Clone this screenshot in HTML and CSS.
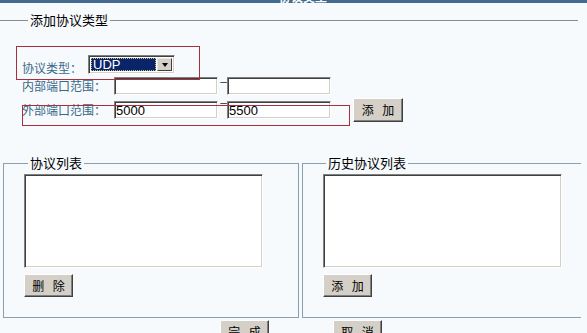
FILE: index.html
```html
<!DOCTYPE html>
<html lang="zh-CN">
<head>
<meta charset="utf-8">
<title>协议类型</title>
<link rel="stylesheet" href="styles.css">
</head>
<body>
<div class="topbar"><span class="title">协议类型</span></div>

<fieldset class="fs-add">
  <legend>添加协议类型</legend>
  <div class="form">
    <div class="row row-type">
      <span class="label label-short">协议类型：</span>
      <div class="select" role="listbox">
        <span class="sel-value">UDP</span>
        <span class="sel-btn"><span class="tri"></span></span>
      </div>
    </div>
    <div class="row row-int">
      <span class="label">内部端口范围：</span>
      <input class="txt" type="text" value="">
      <span class="dash">–</span>
      <input class="txt" type="text" value="">
    </div>
    <div class="row row-ext">
      <span class="label">外部端口范围：</span>
      <input class="txt" type="text" value="5000">
      <span class="dash">–</span>
      <input class="txt" type="text" value="5500">
      <button class="btn btn-add" type="button">添 加</button>
    </div>
  </div>
</fieldset>

<div class="lists">
  <fieldset class="fs-list fs-left">
    <legend>协议列表</legend>
    <textarea class="area"></textarea>
    <div class="list-actions"><button class="btn" type="button">删 除</button></div>
  </fieldset>
  <fieldset class="fs-list fs-right">
    <legend>历史协议列表</legend>
    <textarea class="area"></textarea>
    <div class="list-actions"><button class="btn" type="button">添 加</button></div>
  </fieldset>
</div>

<div class="actions">
  <button class="btn" type="button">完 成</button>
  <button class="btn" type="button">取 消</button>
</div>

<div class="mark mark-1"></div>
<div class="mark mark-2"></div>
</body>
</html>
```

FILE: styles.css
```css
html, body {
  margin: 0;
  padding: 0;
}
body {
  background: #f6fafc;
  font-family: "Noto Sans CJK SC", "Noto Sans", sans-serif;
  font-size: 12px;
  color: #000;
  width: 587px;
  height: 333px;
  overflow: hidden;
  position: relative;
}

.topbar {
  height: 3px;
  background: #416a8e;
  overflow: hidden;
  display: flex;
  align-items: flex-end;
  padding-left: 279px;
}
.title {
  color: #fff;
  font-weight: bold;
  font-size: 12px;
  line-height: 12px;
  flex: none;
}

/* ---------- add fieldset ---------- */
.fs-add {
  margin: 9px 9px 0 0;
  padding: 0;
  border: none;
  border-top: 1px solid #8c8c8c;
  min-inline-size: 0;
}
.fs-add legend {
  margin-left: 28px;
  padding: 0 2px;
  font-size: 13px;
  line-height: 16px;
}
.form {
  padding: 27px 0 0 22px;
}
.row {
  display: flex;
  align-items: center;
}
.row-type {
  height: 20px;
  align-items: flex-start;
}
.row-int {
  height: 18px;
  margin-top: 2px;
}
.row-ext {
  height: 24px;
  margin-top: 3px;
}
.label {
  color: #3a6888;
  width: 92px;
  flex: none;
  line-height: 14px;
  white-space: nowrap;
}
.label-short {
  width: 66px;
  align-self: flex-end;
}

.select {
  width: 87px;
  height: 19px;
  box-sizing: border-box;
  border-top: 1px solid #808080;
  border-left: 1px solid #808080;
  border-right: 1px solid #ffffff;
  border-bottom: 1px solid #ffffff;
  box-shadow: inset 1px 1px #404040, inset -1px -1px #d4d0c8;
  background: #fff;
  padding: 2px;
  display: flex;
  gap: 1px;
}
.sel-value {
  flex: 1;
  background: #0a246a;
  color: #fff;
  font-family: "Liberation Sans", Arial, sans-serif;
  font-size: 13px;
  line-height: 13px;
  padding-left: 2px;
  outline: 1px dotted #c8c080;
  outline-offset: -1px;
}
.sel-btn {
  width: 15px;
  flex: none;
  box-sizing: border-box;
  background: #d4d0c8;
  border-top: 1px solid #e8e6e0;
  border-left: 1px solid #e8e6e0;
  border-right: 1px solid #404040;
  border-bottom: 1px solid #404040;
  display: flex;
  align-items: center;
  justify-content: center;
}
.tri {
  width: 0;
  height: 0;
  border-left: 3px solid transparent;
  border-right: 3px solid transparent;
  border-top: 4px solid #000;
}

.txt {
  width: 104px;
  height: 18px;
  box-sizing: border-box;
  margin: 0;
  padding: 0 0 0 1px;
  background: #fff;
  border-top: 1px solid #808080;
  border-left: 1px solid #808080;
  border-right: 1px solid #ffffff;
  border-bottom: 1px solid #ffffff;
  box-shadow: inset 1px 1px #404040, inset -1px -1px #d4d0c8;
  font-family: "Liberation Sans", Arial, sans-serif;
  font-size: 13px;
  color: #000;
  outline: none;
}
.dash {
  width: 9px;
  flex: none;
  text-align: right;
  font-family: "Liberation Sans", Arial, sans-serif;
  font-size: 12px;
  line-height: 12px;
  color: #444;
  align-self: flex-start;
  margin-top: -1px;
}
.row-ext .dash {
  margin-top: -1px;
}

.btn {
  width: 49px;
  height: 23px;
  box-sizing: border-box;
  margin: 0;
  padding: 0;
  background: #d4d0c8;
  border-top: 1px solid #ffffff;
  border-left: 1px solid #ffffff;
  border-right: 1px solid #404040;
  border-bottom: 1px solid #404040;
  box-shadow: inset -1px -1px #808080;
  font-family: "Noto Sans CJK SC", sans-serif;
  font-size: 12px;
  line-height: 14px;
  color: #000;
  word-spacing: 6px;
}
.btn-add {
  width: 50px;
  height: 24px;
  margin-left: 22px;
}

/* ---------- list fieldsets ---------- */
.lists {
  display: flex;
  gap: 3px;
  margin-top: 33px;
  padding-left: 3px;
}
.fs-list {
  margin: 0;
  padding: 3px 0 20px 20px;
  border: 1px solid #8aa0ac;
  min-inline-size: 0;
  box-sizing: border-box;
}
.fs-left {
  width: 296px;
}
.fs-right {
  width: 279px;
  border-right: none;
}
.fs-list legend {
  margin-left: 4px;
  padding: 0 2px;
  font-size: 13px;
  line-height: 16px;
}
.fs-right legend {
  margin-left: 3px;
}
.area {
  display: block;
  width: 239px;
  height: 94px;
  box-sizing: border-box;
  margin: 0;
  padding: 0;
  resize: none;
  background: #fff;
  border-top: 1px solid #808080;
  border-left: 1px solid #808080;
  border-right: 1px solid #ffffff;
  border-bottom: 1px solid #ffffff;
  box-shadow: inset 1px 1px #404040, inset -1px -1px #d4d0c8;
  outline: none;
}
.list-actions {
  margin-top: 6px;
  display: flex;
}

.actions {
  display: flex;
  gap: 64px;
  padding-left: 220px;
  margin-top: 2px;
}

/* annotation overlays */
.mark {
  position: absolute;
  border: 1px solid #a8303c;
  box-sizing: border-box;
  pointer-events: none;
}
.mark-1 {
  left: 16px;
  top: 46px;
  width: 184px;
  height: 34px;
}
.mark-2 {
  left: 22px;
  top: 105px;
  width: 328px;
  height: 21px;
}
```
